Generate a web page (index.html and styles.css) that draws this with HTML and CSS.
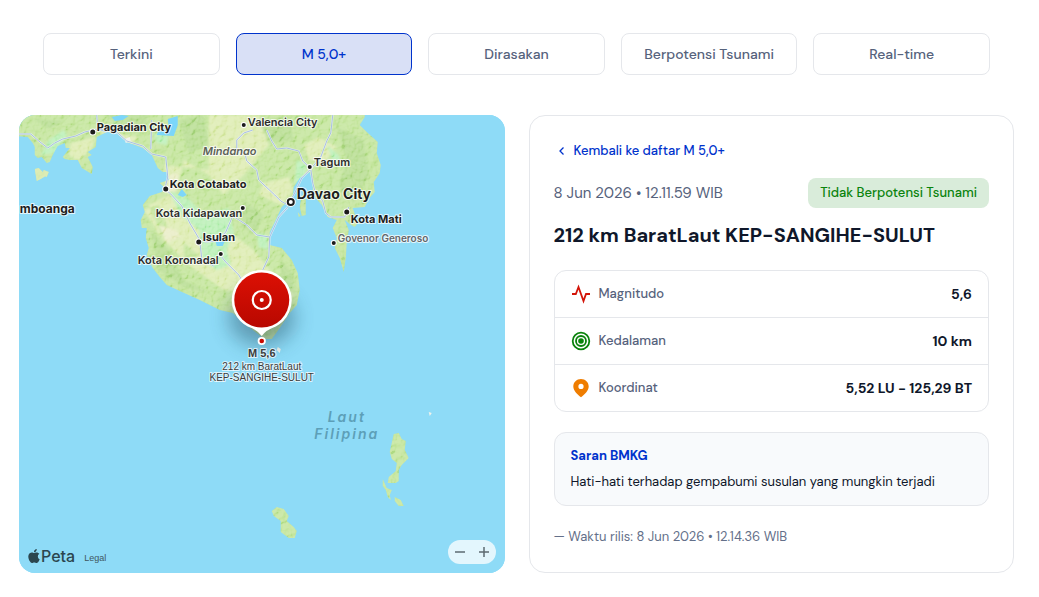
FILE: index.html
```html
<!DOCTYPE html>
<html lang="id">
<head>
<meta charset="utf-8">
<meta name="viewport" content="width=device-width, initial-scale=1">
<title>Gempabumi M 5,0+</title>
<link rel="stylesheet" href="styles.css">
</head>
<body>
<main class="page">
  <nav class="tabs" aria-label="Kategori gempabumi">
    <button class="tab" type="button">Terkini</button>
    <button class="tab tab-active" type="button" aria-current="true">M 5,0+</button>
    <button class="tab" type="button">Dirasakan</button>
    <button class="tab" type="button">Berpotensi Tsunami</button>
    <button class="tab" type="button">Real-time</button>
  </nav>

  <div class="columns">
    <section class="map" aria-label="Peta lokasi gempabumi">
      <svg class="map-canvas" viewBox="0 0 486 458" preserveAspectRatio="xMidYMid slice">
        <defs>
          <path id="mainland" d="M-2-2V21L9 22L14 28L16 32L16 40L19 43L23 42L28 48L31 47L34 40L39 31L46 28L47 33L51 33L44 42L46 44L51 45L59 45L63 53L73 59L74 52L69 42L73 40L69 37L77 32L78 22L88 17L98 18L108 27L124 33L133 40L139 53L144 57L148 57L150 65L141 68L146 73L143 77L131 81L124 90L126 97L122 105L123 113L128 113L127 123L130 133L128 140L134 153L141 162L148 170L161 176L181 185L201 195L214 198L234 215L246 224L253 224L261 213L271 198L278 190L281 175L279 158L273 145L263 133L251 130L251 117L256 107L263 92L274 82L275 72L281 63L291 57L294 67L294 80L303 90L309 102L318 105L314 113L318 123L316 133L321 143L325 157L327 143L328 128L330 115L326 105L331 109L336 112L339 108L334 93L346 92L350 84L356 77L355 67L361 58L362 50L358 38L359 27L348 17L341 10L346 2L346-2Z"/>
          <path id="islands" d="M16 54L20 53L25 58L27 61L22 64L18 66ZM25 55L30 57L28 62L23 60ZM283 80L287 83L287 100L283 101L281 92ZM279 97L282 101L280 102ZM375 319L380 318L383 324L387 326L386 335L390 343L383 350L380 355L380 366L377 368L369 368L370 362L377 356L378 348L373 344L371 337L373 328ZM364 364L368 373L373 375L371 380L372 385L369 382L367 375L364 371ZM376 382L382 385L385 391L380 391L376 386ZM253 396L258 392L265 394L270 401L268 406L275 412L278 416L276 423L270 423L262 417L262 406L255 401Z"/>
          <clipPath id="land-clip"><use href="#mainland"/><use href="#islands"/></clipPath>
          <clipPath id="island-clip"><use href="#islands"/></clipPath>
          <filter id="relief" x="0" y="0" width="100%" height="100%">
            <feTurbulence type="fractalNoise" baseFrequency="0.16" numOctaves="4" seed="7"/>
            <feDiffuseLighting surfaceScale="5" lighting-color="#ffffff">
              <feDistantLight azimuth="225" elevation="50"/>
            </feDiffuseLighting>
          </filter>
          <filter id="soft" x="-20%" y="-20%" width="140%" height="140%"><feGaussianBlur stdDeviation="1"/></filter>
          <filter id="pin-shadow" x="-60%" y="-60%" width="220%" height="240%"><feGaussianBlur stdDeviation="10"/></filter>
          <linearGradient id="pin-fill" x1="0" y1="0" x2="0" y2="1">
            <stop offset="0" stop-color="#dc1004"/><stop offset="1" stop-color="#b80800"/>
          </linearGradient>
        </defs>

        <rect width="486" height="458" fill="#8edbf7"/>
        <g clip-path="url(#land-clip)">
          <rect x="-2" y="-2" width="490" height="462" fill="#c2e49a"/>
          <g filter="url(#soft)">
            <path fill="#dcebb0" d="M52 28L76 22L74 32L66 40L60 46L50 40ZM190 0L240 0L250 30L225 60L205 80L190 60L165 45L158 75L150 78L160 92L205 100L215 120L235 135L255 160L275 180L265 200L240 180L205 175L170 150L180 140L150 115L140 90L125 95L135 110L140 120L165 125L165 145L145 125L130 90L150 80L145 50L190 55ZM285 30L300 22L318 32L305 48L290 45ZM240 80L262 90L275 75L270 62L245 68ZM75 15L120 22L112 30L85 20Z"/>
            <path fill="#b9efb5" d="M150 75L170 84L185 100L210 93L215 118L208 135L212 150L198 155L184 145L180 115L162 100ZM278 45L288 50L286 60L276 70ZM308 30L320 40L324 52L314 45ZM238 118L248 120L250 135L240 132ZM30 25L45 15L48 20L36 38L22 40ZM90 0L110 3L100 16ZM135 18L150 20L148 30L138 28Z"/>
            <path fill="#b6dc90" d="M85-2L130-2L125 18L105 15ZM160 5L185 0L190 30L170 38ZM240 5L270 2L275 25L250 28ZM318 12L345 25L350 60L335 88L320 70L328 45ZM132 115L150 135L165 165L195 180L165 172L140 155ZM225 85L245 100L235 120L222 110ZM262 145L275 160L274 175L262 170ZM15 4L45 6L30 14Z"/>
            <path fill="#e8ecc4" d="M140 110L158 115L162 122L148 128ZM150 60L160 58L158 76L146 78ZM216 176L232 184L226 198L212 192ZM240 158L250 162L256 172L246 170Z"/>
          </g>
          <g class="relief"><rect x="0" y="0" width="486" height="458" filter="url(#relief)"/></g>
        </g>
        <g clip-path="url(#island-clip)"><rect width="60" height="80" fill="#e2edb9" opacity=".7"/></g>

        <path fill="#7cd6fa" d="M93 2L103 0L110 1L104 5L96 6ZM149 4L159 1L159 10L155 21L138 20L140 15L150 13ZM163 74L168 80L164 82L159 80ZM197 127L206 126L204 131L198 131Z"/>
        <path fill="#f2f3ec" d="M106 24L111 22L112 26L107 28ZM259 232L262 234L261 238L258 235ZM410 297L413 298L411 301Z"/>

        <g fill="none" stroke="#f1f6f4" stroke-opacity=".7" stroke-width="2" stroke-linejoin="round">
          <path id="roads" d="M0 19L12 19L20 26L29 33L36 28L44 24L57 21L66 17L79 14L88 17M78 0L79 14L98 17L108 26L124 31L133 39L147 42L149 62L146 74L152 79L163 91L171 108L181 125L183 144L195 151M132 34L133 5M234 15L225 18L218 25L218 35L226 38L228 46L238 55L240 65L256 80L262 86L269 90L276 78L283 63L292 54L302 42L308 26L312 18L314 0M248 15L253 26L258 34L268 33L280 36L284 46L292 54M269 92L260 102L251 122L250 142L244 155L238 170M251 122L238 120L228 110L214 101L207 117L198 126L186 127M203 142L207 147L220 160L230 176M292 54L294 68L297 79L304 86L307 98L312 102L326 102L330 92"/>
        </g>
        <use href="#roads" class="roads"/>

        <g class="dots">
          <circle cx="74" cy="17" r="2.5"/><circle cx="147" cy="74" r="2.5"/><circle cx="180" cy="127" r="2.5"/><circle cx="328" cy="97" r="2.5"/>
          <circle cx="225" cy="10" r="2"/><circle cx="224" cy="93" r="2"/><circle cx="202" cy="139" r="2"/><circle cx="291" cy="52" r="2"/><circle cx="315" cy="128" r="2"/>
          <circle cx="272" cy="87" r="4"/><circle cx="272" cy="87" r="2" class="dot-hole"/>
        </g>
        <g class="places">
          <text class="city" x="78" y="16">Pagadian City</text>
          <text class="city" x="151" y="73">Kota Cotabato</text>
          <text class="city city-mid" x="1" y="98">mboanga</text>
          <text class="town" x="137" y="102">Kota Kidapawan</text>
          <text class="city" x="184" y="126">Isulan</text>
          <text class="town" x="119" y="149">Kota Koronadal</text>
          <text class="region" x="184" y="40">Mindanao</text>
          <text class="town" x="229" y="11">Valencia City</text>
          <text class="town" x="295" y="51">Tagum</text>
          <text class="city city-big" x="278" y="84">Davao City</text>
          <text class="city" x="332" y="108">Kota Mati</text>
          <text class="village" x="319" y="127">Govenor Generoso</text>
        </g>
        <text class="sea" x="328" y="307">Laut</text>
        <text class="sea" x="328" y="324">Filipina</text>

        <ellipse cx="243" cy="203" rx="33" ry="28" fill="#123c50" opacity=".4" filter="url(#pin-shadow)"/>
        <path fill="#fff" d="M243 155A30 30 0 0 1 257 211.500Q247 215 243 221Q239 215 229 211.500A30 30 0 0 1 243 155Z"/>
        <circle cx="243" cy="185" r="27.500" fill="url(#pin-fill)"/>
        <circle cx="243" cy="185" r="9" fill="none" stroke="#fff" stroke-width="2.200"/>
        <circle cx="243" cy="185" r="2" fill="#fff"/>
        <circle cx="243" cy="226" r="3.200" fill="#c80a00" stroke="#fff" stroke-width="1.800"/>
        <text class="pin-title" x="243" y="242">M 5,6</text>
        <text class="pin-note" x="243" y="255">212 km BaratLaut</text>
        <text class="pin-note" x="243" y="266">KEP-SANGIHE-SULUT</text>
      </svg>

      <div class="map-credit">
        <span class="brand">
          <svg class="brand-mark" viewBox="0 0 24 24" aria-hidden="true"><path d="M12.152 6.896c-.948 0-2.415-1.078-3.960-1.040-2.040.027-3.910 1.183-4.961 3.014-2.117 3.675-.546 9.103 1.519 12.090 1.013 1.454 2.208 3.090 3.792 3.039 1.520-.065 2.090-.987 3.935-.987 1.831 0 2.350.987 3.960.948 1.637-.026 2.676-1.480 3.676-2.948 1.156-1.688 1.636-3.325 1.662-3.415-.039-.013-3.182-1.221-3.220-4.857-.026-3.040 2.480-4.494 2.597-4.559-1.429-2.090-3.623-2.324-4.390-2.376-2-.156-3.675 1.090-4.610 1.090zM15.530 3.830c.843-1.012 1.400-2.427 1.245-3.830-1.207.052-2.662.805-3.532 1.818-.780.896-1.454 2.338-1.273 3.714 1.338.104 2.715-.688 3.559-1.701"/></svg>
          <span>Peta</span>
        </span>
        <a class="legal" href="#legal">Legal</a>
      </div>
      <div class="map-zoom">
        <button class="zoom-button" type="button" aria-label="Perkecil"><svg viewBox="0 0 12 12"><path d="M1 6H11"/></svg></button>
        <button class="zoom-button" type="button" aria-label="Perbesar"><svg viewBox="0 0 12 12"><path d="M1 6H11M6 1V11"/></svg></button>
      </div>
    </section>

    <article class="detail">
      <a class="back" href="#daftar">
        <svg class="back-icon" viewBox="0 0 16 16" aria-hidden="true"><path d="M9.500 4.500L6 8L9.500 11.500"/></svg>
        Kembali ke daftar M 5,0+
      </a>
      <div class="summary">
        <time class="time" datetime="2026-06-08T12:11:59">8 Jun 2026 • 12.11.59 WIB</time>
        <span class="badge">Tidak Berpotensi Tsunami</span>
      </div>
      <h1 class="title">212 km BaratLaut KEP-SANGIHE-SULUT</h1>
      <dl class="facts">
        <div class="fact">
          <dt class="fact-name"><svg class="fact-icon" viewBox="0 0 20 20" aria-hidden="true"><path fill="none" stroke="#d31408" stroke-width="1.800" d="M1 10H4.800L7.500 3L12.500 17L15 10H19"/></svg>Magnitudo</dt>
          <dd class="fact-value">5,6</dd>
        </div>
        <div class="fact">
          <dt class="fact-name"><svg class="fact-icon" viewBox="0 0 20 20" aria-hidden="true"><g fill="none" stroke="#0a830c" stroke-width="1.800"><circle cx="10" cy="10" r="8.300"/><circle cx="10" cy="10" r="5"/></g><circle cx="10" cy="10" r="2.800" fill="#0a830c"/></svg>Kedalaman</dt>
          <dd class="fact-value">10 km</dd>
        </div>
        <div class="fact">
          <dt class="fact-name"><svg class="fact-icon" viewBox="0 0 20 20" aria-hidden="true"><path fill="#ef7d00" fill-rule="evenodd" d="M10 1C5.600 1 2.300 4.300 2.300 8.500C2.300 12.800 6.500 16.500 10 19.200C13.500 16.500 17.700 12.800 17.700 8.500C17.700 4.300 14.400 1 10 1ZM10 5.800A2.600 2.600 0 1 1 10 11A2.600 2.600 0 1 1 10 5.800Z"/></svg>Koordinat</dt>
          <dd class="fact-value">5,52 LU - 125,29 BT</dd>
        </div>
      </dl>
      <section class="advice">
        <h2 class="advice-title">Saran BMKG</h2>
        <p class="advice-text">Hati-hati terhadap gempabumi susulan yang mungkin terjadi</p>
      </section>
      <p class="release">— Waktu rilis: 8 Jun 2026 • 12.14.36 WIB</p>
    </article>
  </div>
</main>
</body>
</html>
```
FILE: styles.css
```css
* { box-sizing: border-box; }

body {
  margin: 0;
  background: #fff;
  color: #0f172a;
  font-family: "DM Sans", Inter, "Liberation Sans", sans-serif;
  font-size: 13px;
}

h1, h2, p, dl, dd { margin: 0; }
button { font: inherit; cursor: pointer; }
a { text-decoration: none; }

.page { padding: 33px 25px 24px 19px; }

.tabs {
  display: grid;
  grid-template-columns: repeat(5, 1fr);
  gap: 16px;
  padding: 0 24px;
  margin-bottom: 40px;
}
.tab {
  height: 42px;
  padding: 0 8px;
  border: 1px solid #e5e7eb;
  border-radius: 8px;
  background: #fff;
  color: #56627c;
  font-size: 14px;
  font-weight: 500;
  white-space: nowrap;
}
.tab-active {
  border-color: #0033cc;
  background: #d9e0f6;
  color: #0033cc;
}

.columns {
  display: grid;
  grid-template-columns: 1fr 1fr;
  gap: 24px;
}

.map {
  position: relative;
  overflow: hidden;
  border-radius: 16px;
  background: #8edbf7;
}
.map-canvas {
  position: absolute;
  inset: 0;
  width: 100%;
  height: 100%;
  font-family: Inter, "Liberation Sans", sans-serif;
}
.relief { mix-blend-mode: soft-light; opacity: .4; }
.roads { fill: none; stroke: #a9bfe4; stroke-width: 1; stroke-linejoin: round; }
.dots circle { fill: #1c1c1c; stroke: #fff; stroke-width: 2; paint-order: stroke; }
.dots .dot-hole { fill: #fff; stroke: none; }
.places text { stroke: rgba(255, 255, 255, .75); stroke-width: 2; stroke-linejoin: round; paint-order: stroke; }
.city { fill: #1e1e1e; font-size: 11px; font-weight: 700; }
.city-mid { font-size: 12px; }
.city-big { font-size: 14px; }
.town { fill: #2c2c2c; font-size: 11px; font-weight: 600; }
.village { fill: #62666b; font-size: 10px; font-weight: 600; }
.region { fill: #5c6157; font-size: 11px; font-style: italic; font-weight: 600; }
.sea {
  fill: #5d9fb8;
  font-size: 14px;
  font-style: italic;
  font-weight: 600;
  letter-spacing: 2px;
  text-anchor: middle;
}
.pin-title, .pin-note {
  fill: #3c3c3c;
  stroke: rgba(255, 255, 255, .7);
  stroke-width: 2;
  stroke-linejoin: round;
  paint-order: stroke;
  text-anchor: middle;
  font-family: "Liberation Sans", Arial, sans-serif;
}
.pin-title { font-size: 11px; font-weight: 700; }
.pin-note { font-size: 10px; }

.map-credit {
  position: absolute;
  left: 8px;
  bottom: 6px;
  display: flex;
  align-items: center;
  gap: 9px;
  color: #2b464f;
}
.brand { display: flex; align-items: center; font: 500 16px/22px Inter, sans-serif; }
.brand-mark { width: 14px; height: 14px; fill: currentColor; }
.legal { padding-top: 3px; color: #3f565f; font: 9px "Liberation Sans", Arial, sans-serif; }

.map-zoom {
  position: absolute;
  right: 9px;
  bottom: 9px;
  display: flex;
  overflow: hidden;
  border-radius: 12px;
  background: rgba(255, 255, 255, .75);
}
.zoom-button {
  display: grid;
  place-items: center;
  width: 24px;
  height: 24px;
  padding: 0;
  border: 0;
  background: none;
}
.zoom-button svg { width: 12px; height: 12px; fill: none; stroke: #5d6a70; stroke-width: 1.5; }

.detail {
  display: flex;
  flex-direction: column;
  padding: 24px;
  border: 1px solid #e5e7eb;
  border-radius: 16px;
}
.back {
  display: flex;
  align-items: center;
  gap: 4px;
  align-self: flex-start;
  margin-bottom: 16px;
  color: #0033cc;
  font-weight: 500;
  line-height: 22px;
}
.back-icon { width: 16px; height: 16px; fill: none; stroke: currentColor; stroke-width: 1.3; }
.summary {
  display: flex;
  align-items: center;
  justify-content: space-between;
  gap: 12px;
  margin-bottom: 12px;
}
.time { color: #56627c; font-size: 15px; }
.badge {
  padding: 5px 12px;
  border-radius: 8px;
  background: #d9ecda;
  color: #0a830c;
  font-weight: 500;
  line-height: 20px;
  white-space: nowrap;
}
.title { margin-bottom: 20px; font-size: 20px; font-weight: 700; line-height: 30px; }

.facts { margin-bottom: 20px; border: 1px solid #e5e7eb; border-radius: 12px; }
.fact {
  display: flex;
  align-items: center;
  justify-content: space-between;
  padding: 12px 16px;
  line-height: 22px;
}
.fact + .fact { border-top: 1px solid #e5e7eb; }
.fact-name { display: flex; align-items: center; gap: 8px; color: #56627c; font-weight: 500; }
.fact-icon { width: 20px; height: 20px; }
.fact-value { font-size: 14px; font-weight: 700; }

.advice {
  display: grid;
  gap: 4px;
  margin-bottom: 20px;
  padding: 12px 16px;
  border: 1px solid #e5e7eb;
  border-radius: 12px;
  background: #f8fafc;
}
.advice-title { color: #0033cc; font-size: 13px; font-weight: 700; line-height: 22px; }
.advice-text { line-height: 22px; }
.release { color: #64708a; line-height: 22px; }
```
